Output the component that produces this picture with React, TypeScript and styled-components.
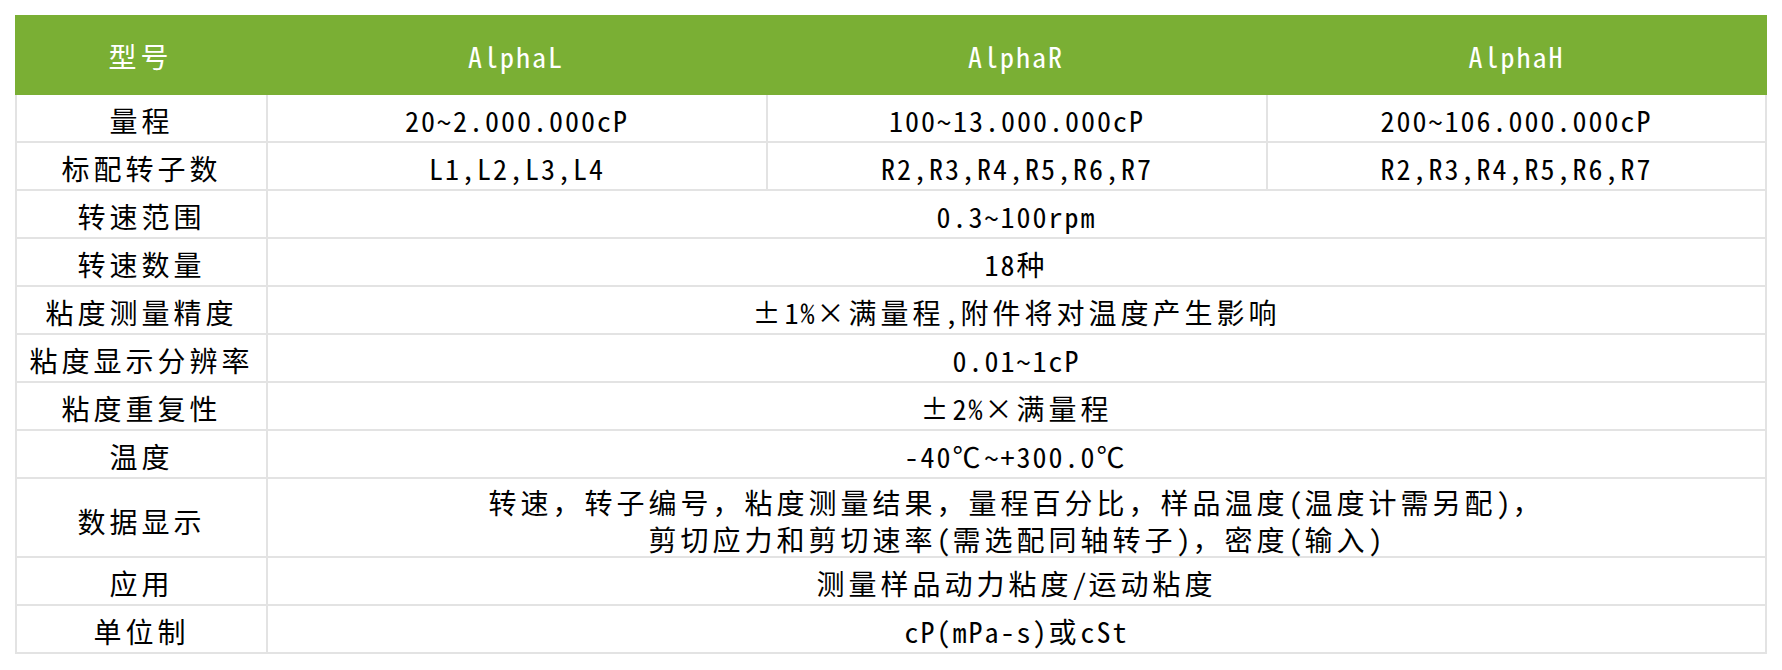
import React from "react";
import styled, { createGlobalStyle } from "styled-components";

const GlobalStyle = createGlobalStyle`
  html, body {
    margin: 0;
    padding: 0;
    background: #ffffff;
  }
  body {
    font-family: "Noto Sans Mono CJK SC", "Noto Sans CJK SC", sans-serif;
  }
`;

const Page = styled.div`
  padding: 15px 15px 16px 15px;
  box-sizing: border-box;
  width: 1782px;
`;

const Table = styled.div`
  width: 1752px;
  display: flex;
  flex-direction: column;
`;

const HeaderRow = styled.div`
  display: grid;
  grid-template-columns: 251px 500px 500px 1fr;
  height: 80px;
  background: #7aaf34;
`;

const HeaderCell = styled.div`
  display: flex;
  align-items: center;
  justify-content: center;
  padding-top: 2px;
  box-sizing: border-box;
  color: #ffffff;
  font-size: 28px;
  letter-spacing: 2px;
  white-space: nowrap;
`;

const Body = styled.div`
  border-left: 2px solid #e3e3e3;
  border-right: 2px solid #e3e3e3;
  display: flex;
  flex-direction: column;
`;

const Row = styled.div<{ $tall?: boolean }>`
  display: grid;
  grid-template-columns: 249px 500px 500px 1fr;
  height: ${(p) => (p.$tall ? "79px" : "48px")};
  box-sizing: border-box;
  border-bottom: 2px solid #e3e3e3;
`;

const Cell = styled.div<{ $span?: number; $first?: boolean }>`
  grid-column: ${(p) => (p.$span ? `span ${p.$span}` : "auto")};
  border-left: ${(p) => (p.$first ? "none" : "2px solid #e3e3e3")};
  display: flex;
  align-items: center;
  justify-content: center;
  text-align: center;
  padding-top: 5px;
  box-sizing: border-box;
  color: #000000;
  font-size: 28px;
  line-height: 37px;
  letter-spacing: 2px;
  white-space: nowrap;
`;

const Lines = styled.div`
  display: flex;
  flex-direction: column;
  align-items: center;
`;

/* full-width (CJK) runs are set a little wider than the half-width Latin */
const Wide = styled.span`
  letter-spacing: 4px;
`;

/* the tilde of the source font sits high, next to the cap line */
const Tilde = styled.span`
  vertical-align: 0.32em;
  line-height: 0;
`;

const WIDE_RE = /([\u2100-\u2BFF\u3000-\u9FFF\uFF00-\uFFEF±×]+|~)/;

function Text({ value }: { value: string }) {
  const parts = value.split(WIDE_RE).filter((p) => p.length > 0);
  return (
    <>
      {parts.map((p, i) => {
        if (p === "~") return <Tilde key={i}>~</Tilde>;
        if (/^[\u2100-\u2BFF\u3000-\u9FFF\uFF00-\uFFEF±×]+$/.test(p)) return <Wide key={i}>{p}</Wide>;
        return <React.Fragment key={i}>{p}</React.Fragment>;
      })}
    </>
  );
}

type Spec = { label: string; values: string[]; tall?: boolean; lines?: string[] };

const rows: Spec[] = [
  { label: "量程", values: ["20~2.000.000cP", "100~13.000.000cP", "200~106.000.000cP"] },
  { label: "标配转子数", values: ["L1,L2,L3,L4", "R2,R3,R4,R5,R6,R7", "R2,R3,R4,R5,R6,R7"] },
  { label: "转速范围", values: ["0.3~100rpm"] },
  { label: "转速数量", values: ["18种"] },
  { label: "粘度测量精度", values: ["±1%×满量程,附件将对温度产生影响"] },
  { label: "粘度显示分辨率", values: ["0.01~1cP"] },
  { label: "粘度重复性", values: ["±2%×满量程"] },
  { label: "温度", values: ["-40℃~+300.0℃"] },
  {
    label: "数据显示",
    values: [],
    tall: true,
    lines: [
      "转速，转子编号，粘度测量结果，量程百分比，样品温度(温度计需另配)，",
      "剪切应力和剪切速率(需选配同轴转子)，密度(输入)",
    ],
  },
  { label: "应用", values: ["测量样品动力粘度/运动粘度"] },
  { label: "单位制", values: ["cP(mPa-s)或cSt"] },
];

const headers = ["型号", "AlphaL", "AlphaR", "AlphaH"];

export default function App() {
  return (
    <Page>
      <GlobalStyle />
      <Table>
        <HeaderRow>
          {headers.map((h) => (
            <HeaderCell key={h}>
              <Text value={h} />
            </HeaderCell>
          ))}
        </HeaderRow>
        <Body>
          {rows.map((r) => (
            <Row key={r.label} $tall={r.tall}>
              <Cell $first>
                <Text value={r.label} />
              </Cell>
              {r.lines ? (
                <Cell $span={3}>
                  <Lines>
                    {r.lines.map((l) => (
                      <span key={l}>
                        <Text value={l} />
                      </span>
                    ))}
                  </Lines>
                </Cell>
              ) : r.values.length === 1 ? (
                <Cell $span={3}>
                  <Text value={r.values[0]} />
                </Cell>
              ) : (
                r.values.map((v, i) => (
                  <Cell key={i}>
                    <Text value={v} />
                  </Cell>
                ))
              )}
            </Row>
          ))}
        </Body>
      </Table>
    </Page>
  );
}
